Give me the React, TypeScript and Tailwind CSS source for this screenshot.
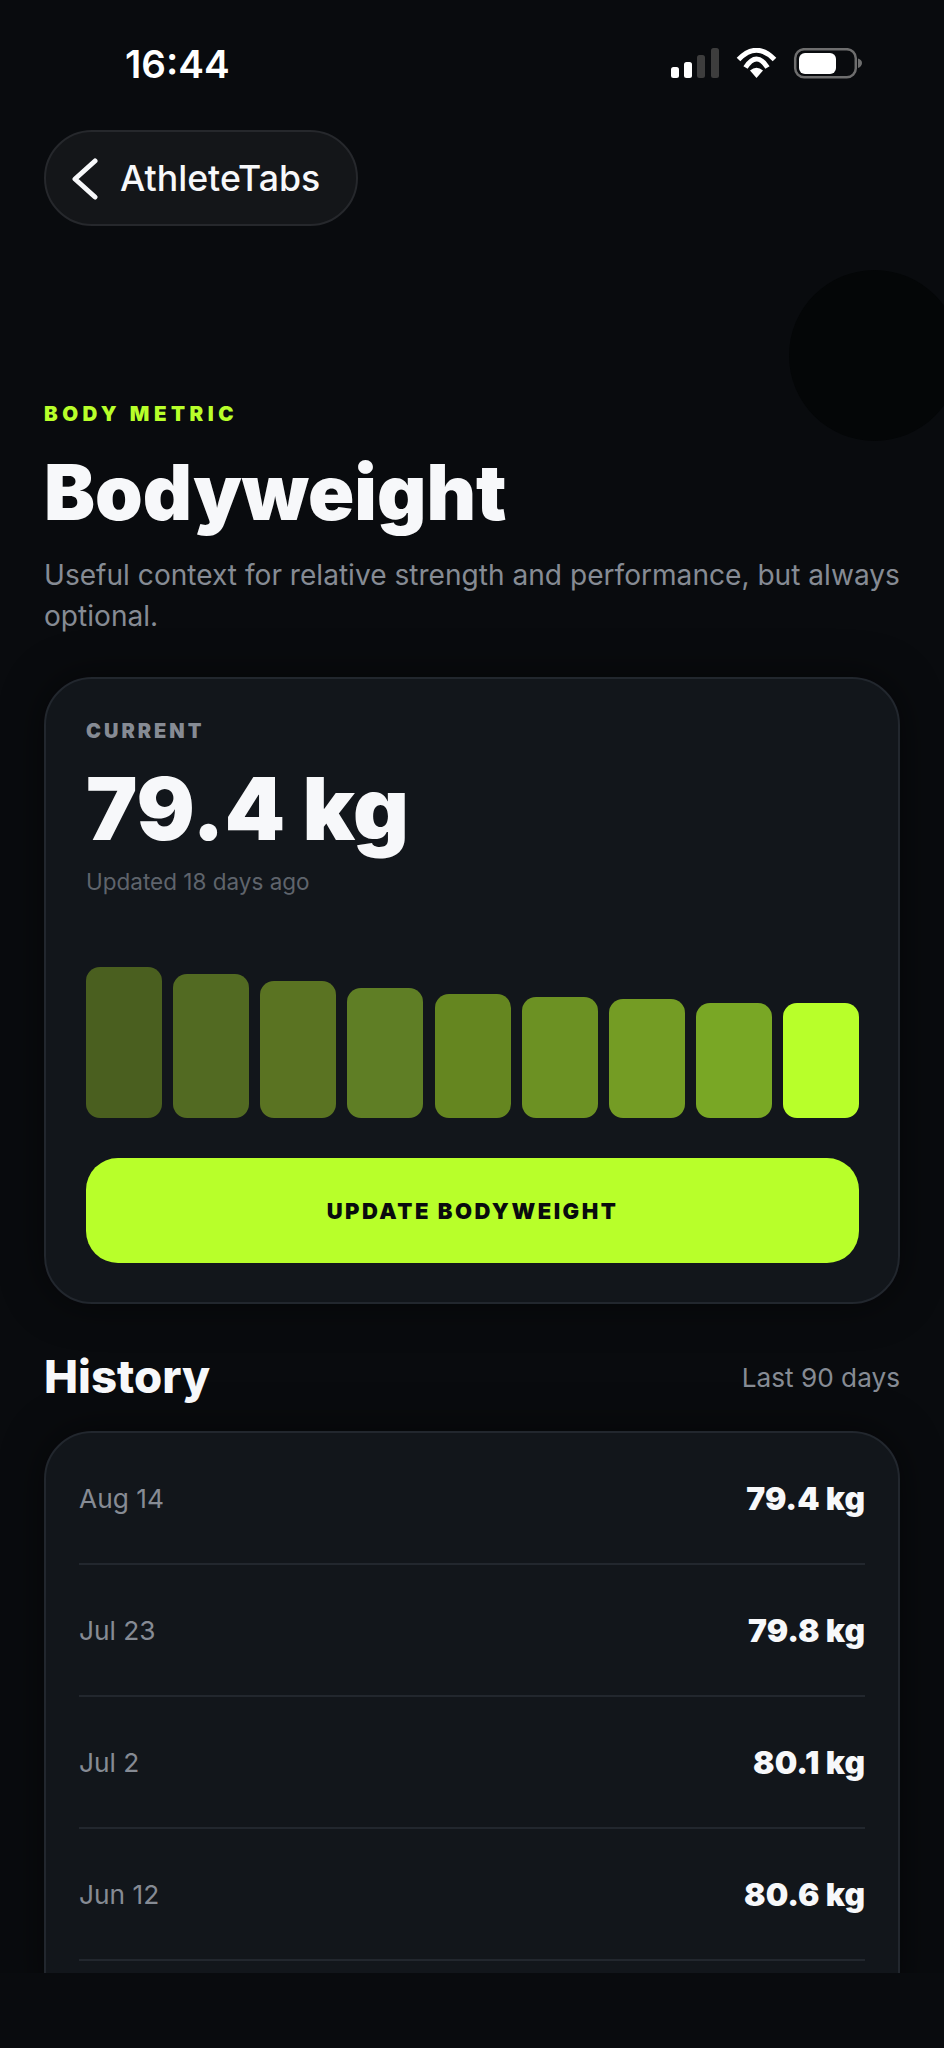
const bars = [
  { height: 151, color: "bg-[#4a5f1f]" },
  { height: 144, color: "bg-[#526a22]" },
  { height: 137, color: "bg-[#5a7322]" },
  { height: 130, color: "bg-[#5f7e25]" },
  { height: 124, color: "bg-[#658620]" },
  { height: 121, color: "bg-[#6c9123]" },
  { height: 119, color: "bg-[#749c24]" },
  { height: 115, color: "bg-[#79a725]" },
  { height: 115, color: "bg-[#b8ff2a]" },
];

const history = [
  { date: "Aug 14", value: "79.4 kg" },
  { date: "Jul 23", value: "79.8 kg" },
  { date: "Jul 2", value: "80.1 kg" },
  { date: "Jun 12", value: "80.6 kg" },
];

const StatusIcons = () => (
  <svg width="192" height="31" viewBox="0 0 192 31" fill="none">
    <rect x="0" y="19" width="8" height="11" rx="2.5" fill="#fff" />
    <rect x="13" y="14" width="8" height="16" rx="2.5" fill="#fff" />
    <rect x="26" y="7" width="8" height="23" rx="2.5" fill="#3d3d3d" />
    <rect x="40" y="0" width="8" height="30" rx="2.5" fill="#3d3d3d" />
    <path d="M67.5 11.5Q85.5 -7 103.5 11.5" stroke="#fff" strokeWidth="5" />
    <path d="M74.5 19.5Q85.5 2.5 96.5 19.5" stroke="#fff" strokeWidth="5" />
    <path d="M85.5 30L79 22.5Q85.5 17 92 22.5Z" fill="#fff" />
    <rect x="124.2" y="1.2" width="60.6" height="28" rx="9" stroke="#6e6e6e" strokeWidth="2.5" />
    <rect x="128" y="5" width="37" height="21" rx="6" fill="#fff" />
    <path d="M187 10.5C189.5 11 191 13 191 15C191 17 189.5 19.5 187 20Z" fill="#6e6e6e" />
  </svg>
);

export default function App() {
  return (
    <div className="relative h-[2048px] w-[944px] overflow-hidden bg-[#090b0e] font-['Inter',sans-serif] text-[#f7f8fa]">
      <div className="absolute left-[789px] top-[270px] size-[171px] rounded-full bg-[#040607]" />

      <div className="relative h-[1973px] overflow-hidden px-[44px]">
        {/* status bar */}
        <div className="flex h-[130px] items-start justify-between">
          <span className="mt-[41px] ml-[81px] text-[38.6px] leading-[46px] font-semibold text-white">16:44</span>
          <div className="mt-[48px] mr-[37px]">
            <StatusIcons />
          </div>
        </div>

        <button className="flex h-[96px] w-[314px] items-center rounded-full border-2 border-[#26282c] bg-[#141619] pl-[26px]">
          <svg width="26" height="42" viewBox="0 0 26 42" fill="none" className="mt-[1px] shrink-0">
            <path d="M23 3L3 21L23 39" stroke="#f7f8fa" strokeWidth="5" strokeLinecap="round" strokeLinejoin="round" />
          </svg>
          <span className="mt-[1px] ml-[22px] text-[35.7px] leading-none font-medium">AthleteTabs</span>
        </button>

        <p className="mt-[176px] text-[20.5px] leading-[24px] font-black tracking-[4.5px] text-[#b8ff2a]">BODY METRIC</p>
        <h1 className="mt-[24px] text-[76.4px] leading-[84px] font-black">Bodyweight</h1>
        <p className="mt-[21px] -mr-[8px] text-[28.1px] leading-[41px] text-[#868b94]">
          Useful context for relative strength and performance, but always optional.
        </p>

        <section className="mt-[40px] h-[627px] rounded-[48px] border-2 border-[#22272e] bg-[#12161b] pr-[39px] pl-[40px] pt-[40px] shadow-[0_0_40px_rgba(0,0,0,0.5)]">
          <p className="text-[20px] leading-[24px] font-black tracking-[3px] text-[#868b94]">CURRENT</p>
          <p className="mt-[18px] text-[86.5px] leading-[96px] font-black">79.4 kg</p>
          <p className="mt-[11px] text-[22.5px] leading-[28px] text-[#5f646c]">Updated 18 days ago</p>

          <div className="mt-[71px] flex h-[151px] items-end justify-between">
            {bars.map((bar, index) => (
              <div key={index} className={`w-[76px] rounded-[14px] ${bar.color}`} style={{ height: bar.height }} />
            ))}
          </div>

          <button className="mt-[40px] flex h-[105px] w-full items-center justify-center rounded-[32px] bg-[#b8ff2a] text-[22px] font-black tracking-[2.5px] text-[#090b0e]">
            <span className="mt-[2px]">UPDATE BODYWEIGHT</span>
          </button>
        </section>

        <div className="mt-[45px] flex items-center justify-between">
          <h2 className="text-[45.5px] leading-[56px] font-extrabold">History</h2>
          <span className="mt-[2px] text-[26.2px] text-[#868b94]">Last 90 days</span>
        </div>

        <section className="mt-[26px] rounded-[48px] border-2 border-[#22272e] bg-[#12161b] pr-[33px] pl-[33px] pb-[60px] shadow-[0_0_40px_rgba(0,0,0,0.5)]">
          {history.map((row) => (
            <div key={row.date} className="flex h-[132px] items-center justify-between border-b-2 border-[#22272e] pt-[2px]">
              <span className="text-[26.3px] text-[#868b94]">{row.date}</span>
              <span className="text-[31.8px] font-black">{row.value}</span>
            </div>
          ))}
        </section>
      </div>
    </div>
  );
}
